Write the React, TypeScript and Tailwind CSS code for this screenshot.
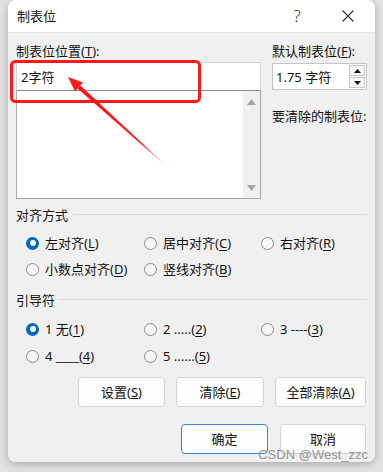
const Radio = ({ checked }: { checked?: boolean }) =>
  checked ? (
    <span className="flex h-[13px] w-[13px] shrink-0 items-center justify-center rounded-full bg-[#0067c0]">
      <span className="h-[6px] w-[6px] rounded-full bg-white" />
    </span>
  ) : (
    <span className="h-[13px] w-[13px] shrink-0 rounded-full border border-[#8a8a8a] bg-[#f7f7f7]" />
  );

const Option = ({
  checked,
  text,
  mn,
}: {
  checked?: boolean;
  text: string;
  mn: string;
}) => (
  <div className="flex h-[18px] items-center gap-[6px] whitespace-nowrap">
    <Radio checked={checked} />
    <span className="leading-[18px]">
      {text}(<u className="underline-offset-2">{mn}</u>)
    </span>
  </div>
);

const Section = ({ title }: { title: string }) => (
  <div className="flex h-[18px] items-center gap-[5px]">
    <span className="leading-[18px]">{title}</span>
    <div className="mt-[-2px] h-px flex-1 bg-[#dadada]" />
  </div>
);

const Btn = ({
  w,
  children,
  primary,
}: {
  w: string;
  children: React.ReactNode;
  primary?: boolean;
}) => (
  <div
    className={`flex h-[30px] items-center justify-center rounded-[4px] border bg-[#fdfdfd] leading-[18px] ${w} ${
      primary ? "border-[#3a86d4]" : "border-[#d3d3d3]"
    }`}
  >
    {children}
  </div>
);

const App = () => {
  return (
    <div className="relative h-[472px] w-[383px] overflow-hidden bg-[#e2e2e2] font-['Noto_Sans','Noto_Sans_CJK_SC',sans-serif] text-[13px] text-[#111]">
      <div className="ml-[8px] flex h-[462px] w-[367px] flex-col overflow-hidden rounded-[8px] shadow-[0_2px_8px_rgba(0,0,0,0.25)]">
        {/* title bar */}
        <div className="flex h-[33px] shrink-0 items-center border-b border-[#e6e6e6] bg-white pl-[9px] pr-[4px]">
          <span className="leading-[18px]">制表位</span>
          <div className="ml-auto flex gap-[5px]">
            <div className="flex w-[46px] items-center justify-center text-[17px] font-light leading-[20px] text-[#333]">
              ?
            </div>
            <div className="flex w-[46px] items-center justify-center">
              <svg width="12" height="12" viewBox="0 0 12 12">
                <path
                  d="M0.5 0.5 L11.5 11.5 M11.5 0.5 L0.5 11.5"
                  stroke="#333"
                  strokeWidth="1.1"
                />
              </svg>
            </div>
          </div>
        </div>

        {/* body */}
        <div className="flex flex-1 flex-col bg-[#f0f0f0] px-[8px] pt-[9px]">
          <div className="flex gap-[11px]">
            <div className="flex w-[245px] flex-col">
              <div className="h-[18px] leading-[18px]">
                制表位位置(<u>T</u>):
              </div>
              <div className="mt-[2px] flex h-[29px] items-center border border-[#d2d2d2] border-b-[#8c8c8c] bg-white pl-[4px] leading-[18px]">
                2字符
              </div>
              <div className="flex h-[108px] border border-t-0 border-[#a8a8a8] bg-white">
                <div className="flex-1" />
                <div className="flex w-[17px] flex-col items-center justify-between bg-[#f0f0f0] pb-[7px] pt-[8px]">
                  <svg width="9" height="6" viewBox="0 0 9 6">
                    <path d="M4.5 0 L9 6 L0 6 Z" fill="#a3a3a3" />
                  </svg>
                  <svg width="9" height="6" viewBox="0 0 9 6">
                    <path d="M0 0 L9 0 L4.5 6 Z" fill="#a3a3a3" />
                  </svg>
                </div>
              </div>
            </div>

            <div className="flex w-[95px] flex-col">
              <div className="h-[18px] whitespace-nowrap leading-[18px]">
                默认制表位(<u>F</u>):
              </div>
              <div className="mt-[3px] flex h-[27px] items-center border border-[#c6c6c6] bg-white pl-[3px]">
                <span className="leading-[18px]">1.75 字符</span>
                <div className="ml-auto mr-[1px] flex w-[16px] flex-col gap-[1px]">
                  <div className="flex h-[11px] items-center justify-center border border-[#c9c9c9] bg-[#f6f6f6]">
                    <svg width="7" height="4" viewBox="0 0 7 4">
                      <path d="M3.5 0 L7 4 L0 4 Z" fill="#111" />
                    </svg>
                  </div>
                  <div className="flex h-[11px] items-center justify-center border border-[#c9c9c9] bg-[#f6f6f6]">
                    <svg width="7" height="4" viewBox="0 0 7 4">
                      <path d="M0 0 L7 0 L3.5 4 Z" fill="#111" />
                    </svg>
                  </div>
                </div>
              </div>
              <div className="mt-[17px] h-[18px] whitespace-nowrap leading-[18px]">
                要清除的制表位:
              </div>
            </div>
          </div>

          <div className="mt-[7px]">
            <Section title="对齐方式" />
          </div>
          <div className="mt-[10px] grid grid-cols-[118px_117px_auto] gap-y-[8px] pl-[10px]">
            <Option checked text="左对齐" mn="L" />
            <Option text="居中对齐" mn="C" />
            <Option text="右对齐" mn="R" />
            <Option text="小数点对齐" mn="D" />
            <Option text="竖线对齐" mn="B" />
          </div>

          <div className="mt-[13px]">
            <Section title="引导符" />
          </div>
          <div className="mt-[11px] grid grid-cols-[118px_117px_auto] gap-y-[9px] pl-[10px]">
            <Option checked text="1 无" mn="1" />
            <Option text="2 ....." mn="2" />
            <Option text="3 ----" mn="3" />
            <Option text="4 ____" mn="4" />
            <Option text="5 ......" mn="5" />
          </div>

          <div className="mt-[12px] flex justify-end gap-[11px] pr-[1px]">
            <Btn w="w-[87px]">
              设置(<u>S</u>)
            </Btn>
            <Btn w="w-[88px]">
              清除(<u>E</u>)
            </Btn>
            <Btn w="w-[91px]">
              全部清除(<u>A</u>)
            </Btn>
          </div>

          <div className="mt-[17px] flex justify-end gap-[12px] pr-[1px]">
            <Btn w="w-[87px]" primary>
              确定
            </Btn>
            <Btn w="w-[86px]">取消</Btn>
          </div>
        </div>
      </div>

      {/* annotation overlay */}
      <svg
        className="pointer-events-none absolute inset-0"
        width="383"
        height="472"
        viewBox="0 0 383 472"
      >
        <defs>
          <linearGradient
            id="shaft"
            gradientUnits="userSpaceOnUse"
            x1="79"
            y1="87"
            x2="163"
            y2="163"
          >
            <stop offset="0" stopColor="#ff1010" />
            <stop offset="0.75" stopColor="#ff2020" />
            <stop offset="1" stopColor="#ff4040" stopOpacity="0.1" />
          </linearGradient>
        </defs>
        <rect
          x="11.5"
          y="61.5"
          width="188"
          height="40"
          rx="4"
          fill="none"
          stroke="#ff1a1a"
          strokeWidth="3"
        />
        <polygon points="68,77 83,82.6 75,91.4" fill="#ff1a1a" />
        <polygon
          points="80.4,85.5 163.3,162.8 162.8,163.3 77.6,88.5"
          fill="url(#shaft)"
        />
      </svg>

      <div className="pointer-events-none absolute right-[15px] top-[446px] font-['Liberation_Sans',sans-serif] text-[13px] leading-[18px] text-[#8c8c8c] opacity-90">
        CSDN @West_zzc
      </div>
    </div>
  );
};

export default App;
